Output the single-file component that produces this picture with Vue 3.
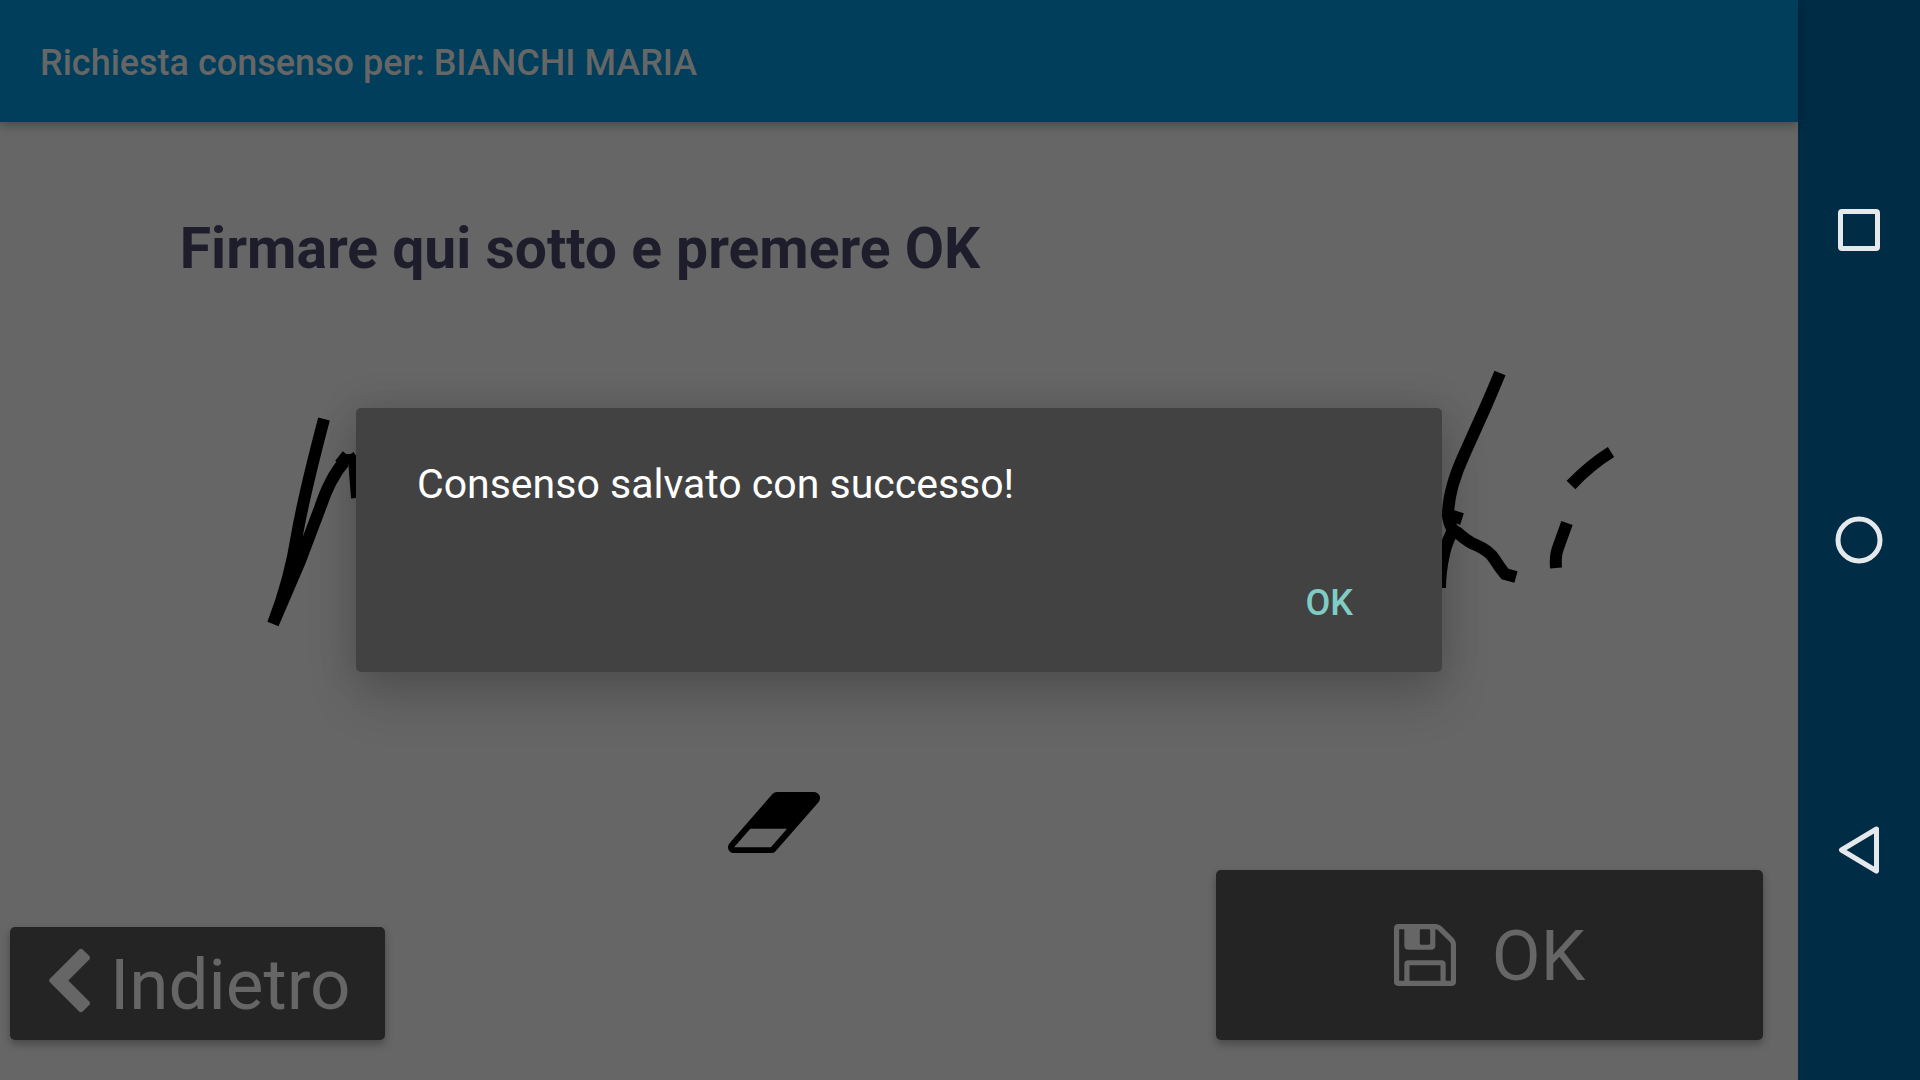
<script setup>
import { ref } from 'vue'

const paziente = ref('BIANCHI MARIA')
const dialogAperto = ref(true)

// tratti della firma
const tratti = ref([
  'M324 79Q304 155 297 195Q290 240 273 284L300 221L320 168Q330 138 344 122',
  'M339 116L349 124',
  'M349 114V124',
  'M350 122L357 117',
  'M354 118L357 158',
  'M1500 33Q1493 50 1486 66L1464 115Q1448 150 1448 176Q1450 190 1458 193Q1468 202 1476 205Q1490 211 1495 220Q1500 228 1505 234L1516 237',
  'M1462 179L1446 174',
  'M1456 185Q1447 200 1444 214Q1440 232 1440 248',
  'M1611 112Q1590 125 1571 145',
  'M1567 183L1558 208Q1555 216 1556 228'
])

function cancella() {
  tratti.value = []
}

function salva() {
  dialogAperto.value = true
}
</script>

<template>
  <div class="schermo">
    <div class="pagina">
      <header class="barra">
        <h1 class="titolo">Richiesta consenso per: {{ paziente }}</h1>
      </header>

      <main class="contenuto">
        <h2 class="istruzioni">Firmare qui sotto e premere OK</h2>

        <svg class="firma" viewBox="0 0 1798 400" role="img" aria-label="Firma">
          <path v-for="(t, i) in tratti" :key="i" :d="t" />
        </svg>

        <button class="gomma" type="button" aria-label="Cancella" @click="cancella">
          <svg viewBox="64 256 1920 1280">
            <path d="M960 1408l336-384h-768l-336 384h768zm1013-1077q15 34 9.5 71.5t-30.5 65.5l-896 1024q-38 44-96 44h-768q-38 0-69.5-20.5t-47.5-54.5q-15-34-9.5-71.5t30.5-65.5l896-1024q38-44 96-44h768q38 0 69.5 20.5t47.5 54.5z" />
          </svg>
        </button>
      </main>

      <footer class="azioni">
        <button class="btn indietro" type="button">
          <svg class="freccia" viewBox="380 26 1066 1612">
            <path d="M1427 301l-531 531 531 531q19 19 19 45t-19 45l-166 166q-19 19-45 19t-45-19l-742-742q-19-19-19-45t19-45l742-742q19-19 45-19t45 19l166 166q19 19 19 45t-19 45z" />
          </svg>
          <span>Indietro</span>
        </button>
        <button class="btn conferma" type="button" @click="salva">
          <svg class="disco" viewBox="128 128 1536 1536">
            <path d="M512 1536h768v-384h-768v384zm896 0h128v-896q0-14-10-38.5t-20-34.5l-281-281q-10-10-34-20t-39-10v416q0 40-28 68t-68 28h-576q-40 0-68-28t-28-68v-416h-128v1280h128v-416q0-40 28-68t68-28h832q40 0 68 28t28 68v416zm-384-928v-320q0-13-9.5-22.5t-22.5-9.5h-192q-13 0-22.5 9.5t-9.5 22.5v320q0 13 9.5 22.5t22.5 9.5h192q13 0 22.5-9.5t9.5-22.5zm640 32v928q0 40-28 68t-68 28h-1344q-40 0-68-28t-28-68v-1344q0-40 28-68t68-28h928q40 0 88 20t76 48l280 280q28 28 48 76t20 88z" />
          </svg>
          <span>OK</span>
        </button>
      </footer>

      <div v-if="dialogAperto" class="velo">
        <div class="dialogo" role="dialog" aria-labelledby="messaggio">
          <p id="messaggio" class="messaggio">Consenso salvato con successo!</p>
          <button class="chiudi" type="button" @click="dialogAperto = false">OK</button>
        </div>
      </div>
    </div>

    <nav class="navigazione">
      <button type="button" aria-label="Recenti">
        <svg viewBox="0 0 48 48"><rect x="5.5" y="5.5" width="37" height="37" rx="1.5" /></svg>
      </button>
      <button type="button" aria-label="Home">
        <svg viewBox="0 0 48 48"><circle cx="24" cy="24" r="21" /></svg>
      </button>
      <button type="button" aria-label="Torna indietro">
        <svg viewBox="0 0 48 48"><path d="M41.5 3L6.5 24L41.5 45Z" /></svg>
      </button>
    </nav>
  </div>
</template>

<style>
body {
  margin: 0;
  background: #666;
}
</style>

<style scoped>
.schermo {
  display: flex;
  min-height: 100vh;
  font-family: Roboto, sans-serif;
}

.pagina {
  position: relative;
  display: flex;
  flex-direction: column;
  flex: 1;
  min-width: 0;
  background: #666;
}

.barra {
  display: flex;
  align-items: center;
  height: 122px;
  padding: 4px 40px 0;
  box-sizing: border-box;
  background: #003e5b;
  box-shadow: 0 3px 10px rgba(0, 0, 0, 0.3);
}

.titolo {
  margin: 0;
  font-size: 36px;
  font-weight: 500;
  line-height: 44px;
  color: #666;
}

.contenuto {
  display: flex;
  flex-direction: column;
  flex: 1;
  padding-top: 93px;
}

.istruzioni {
  margin: 0 10%;
  font-size: 57px;
  font-weight: 700;
  line-height: 68px;
  color: #1e1d2b;
}

.firma {
  width: 100%;
  margin-top: 57px;
  fill: none;
  stroke: #000;
  stroke-width: 12;
}

.gomma {
  align-self: flex-start;
  width: 92px;
  margin: auto 0 17px 40.5%;
  padding: 0;
  border: 0;
  background: none;
}

.gomma svg {
  display: block;
  width: 100%;
}

.azioni {
  display: flex;
  align-items: flex-end;
  justify-content: space-between;
  padding: 0 35px 40px 10px;
}

.btn {
  display: flex;
  align-items: center;
  padding: 0;
  border: 0;
  border-radius: 5px;
  background: #242424;
  box-shadow: 0 4px 8px rgba(0, 0, 0, 0.3);
  color: #666;
  fill: #666;
  font-family: inherit;
  font-size: 71px;
  line-height: 84px;
}

.btn span {
  padding-top: 2px;
}

.indietro {
  height: 113px;
  gap: 20px;
  padding: 0 34px 0 38px;
}

.freccia {
  width: 42px;
  height: 65px;
  margin-bottom: 6px;
}

.conferma {
  justify-content: center;
  width: 31.2%;
  min-width: 360px;
  height: 170px;
  gap: 36px;
}

.disco {
  width: 62px;
  height: 62px;
}

.velo {
  position: absolute;
  inset: 0;
  display: flex;
  align-items: center;
  justify-content: center;
}

.dialogo {
  display: flex;
  flex-direction: column;
  box-sizing: border-box;
  width: 60.4%;
  padding: 51px 61px 35px;
  border-radius: 5px;
  background: #424242;
  box-shadow: 0 28px 50px rgba(0, 0, 0, 0.16), 0 0 40px rgba(0, 0, 0, 0.14);
}

.messaggio {
  margin: 0;
  font-size: 41px;
  line-height: 50px;
  color: #fff;
}

.chiudi {
  align-self: flex-end;
  margin-top: 60px;
  padding: 12px 28px;
  border: 0;
  background: none;
  color: #80cbc4;
  font-family: inherit;
  font-size: 36px;
  font-weight: 500;
  line-height: 44px;
}

.navigazione {
  display: flex;
  flex-direction: column;
  justify-content: center;
  width: 122px;
  background: #002c46;
}

.navigazione button {
  display: flex;
  align-items: center;
  justify-content: center;
  height: 310px;
  padding: 0;
  border: 0;
  background: none;
}

.navigazione svg {
  width: 48px;
  height: 48px;
  fill: none;
  stroke: #e5e9ec;
  stroke-width: 5;
  stroke-linejoin: round;
}
</style>
